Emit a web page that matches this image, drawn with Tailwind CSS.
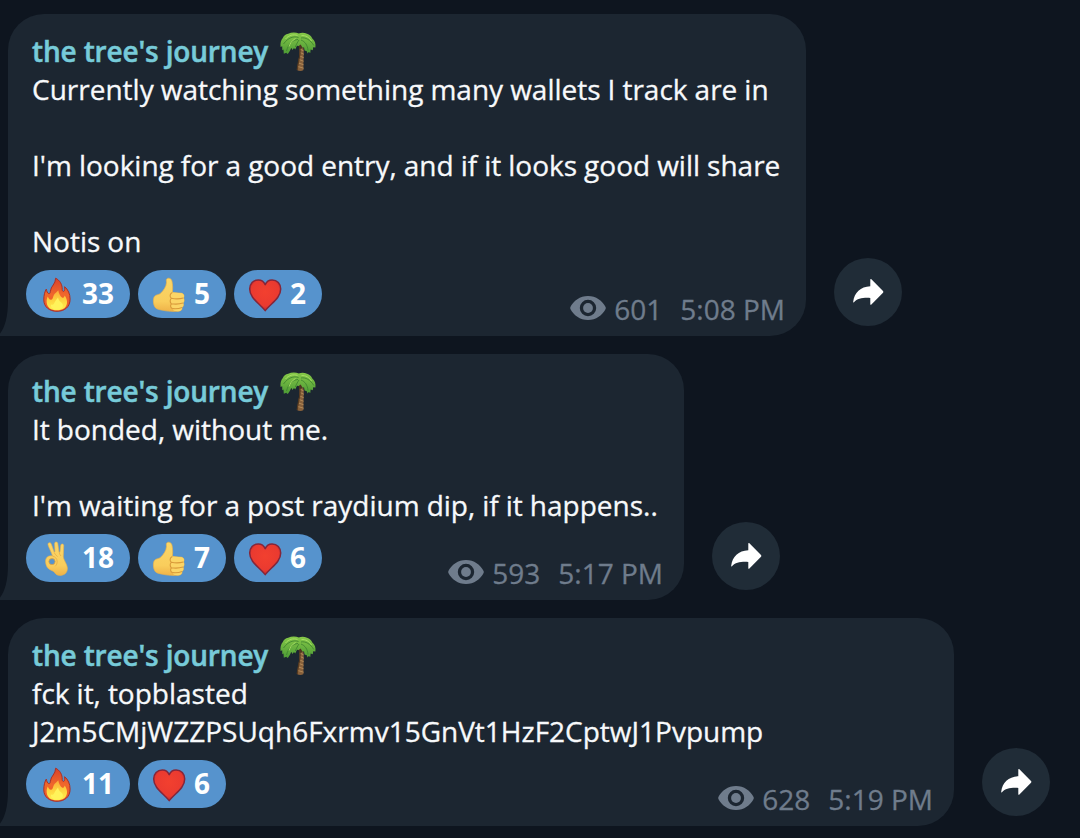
<!DOCTYPE html>
<html lang="en">
<head>
  <meta charset="UTF-8" />
  <meta name="viewport" content="width=device-width, initial-scale=1.0"/>
  <title>the tree's journey</title>
  <script src="https://cdn.jsdelivr.net/npm/@tailwindcss/browser@4"></script>
</head>
<body class="bg-[#0e151f] font-['Open_Sans','Noto_Sans',sans-serif] text-[28px] leading-[38px] text-[#f7f9fb] overflow-hidden">

  <!-- shared icons -->
  <svg class="absolute w-0 h-0" aria-hidden="true">
    <defs>
      <linearGradient id="gFire" x1="0" y1="0" x2="0" y2="1">
        <stop offset="0" stop-color="#d9412a"/><stop offset=".5" stop-color="#f0672c"/><stop offset="1" stop-color="#e8552a"/>
      </linearGradient>
      <linearGradient id="gFlame" x1="0" y1="0" x2="0" y2="1">
        <stop offset="0" stop-color="#fba93a"/><stop offset=".5" stop-color="#fdd33f"/><stop offset="1" stop-color="#fff04f"/>
      </linearGradient>
      <radialGradient id="gHeart" cx=".5" cy=".4" r=".6">
        <stop offset="0" stop-color="#f2402f"/><stop offset=".75" stop-color="#ea3a30"/><stop offset="1" stop-color="#c3282b"/>
      </radialGradient>
      <linearGradient id="gHand" x1="0" y1="0" x2="0" y2="1">
        <stop offset="0" stop-color="#fbd768"/><stop offset=".7" stop-color="#f9cd5c"/><stop offset="1" stop-color="#efb349"/>
      </linearGradient>
      <linearGradient id="gLeaf" x1="0" y1="0" x2="0" y2="1">
        <stop offset="0" stop-color="#86c948"/><stop offset="1" stop-color="#4c9a35"/>
      </linearGradient>
    </defs>
    <symbol id="fire" viewBox="0 0 34 36">
      <path d="M15.600 2.200C19.800 4.200 22.400 8.400 22.200 13.600C22.200 14.800 22.900 15.700 23.800 15.300C24.900 14.700 24.900 12.500 24.600 10.700C28 13.400 30.100 18 30.100 23.100C30.100 30.900 24.700 35.300 17 35.300C9.300 35.300 3.800 30.900 3.800 23.900C3.800 19.200 4.700 15.600 6.300 13.100C6.700 15.200 7.400 17 8.700 17.600C9.600 17.900 10.200 17 10.300 15.700C10.700 9.800 15.800 8.200 15.600 2.200Z" fill="url(#gFire)" stroke="#a92f27" stroke-width="1"/>
      <path d="M18.300 14.200C18.800 17.800 20.400 20.300 22 21.500C23.100 22.200 24.200 21.300 24.600 19.400C26.200 21.300 27.300 24 27 27C26.400 32 22.500 34.300 17 34.300C11.200 34.300 7.300 31.800 6.700 26.800C6.400 24.200 6.900 22.200 7.800 20.600C8.600 22.800 9.800 24.200 11.200 23.800C12.900 23.300 12.900 21.100 13.900 19C14.800 17 16.900 16.200 18.300 14.200Z" fill="url(#gFlame)"/>
      <path d="M18 21.500C18.400 24.500 21 26 22.500 28C24 31 21 33.500 17 33.500C13 33.500 10.500 31.500 11 28.500C12 29 13.300 29 14 27.500C14.800 25.600 16 24.300 18 21.500Z" fill="#fff35a"/>
    </symbol>
    <symbol id="thumb" viewBox="0 0 34 36">
      <path d="M14.800 2.900C16.300 1.500 19.200 2.300 19.900 4.900C20.700 8.500 20.900 12.500 20.300 16.500L29.400 17.200C32 17.500 32.600 20.300 31.400 22C32.500 23.300 32.400 25.700 31 27C31.900 28.700 31.400 30.500 30 31.500C30.400 33.800 28.700 35.200 26.200 35.300C20.600 35.500 15.500 35.400 11 34.300C8.500 33.700 5 33.600 3.400 31.700C1 28.700.8 22.600 2.500 20.400C4.200 18.400 7 18.900 8.700 17.200C11.500 14.500 14.300 10.800 14.500 6.600C14.500 5.300 14 3.800 14.800 2.900Z" fill="url(#gHand)" stroke="#e9b24b" stroke-width=".7"/>
      <path d="M20.300 16.500L29.400 17.200C32 17.500 32.600 20.300 31.400 22C32.500 23.300 32.400 25.700 31 27C31.900 28.700 31.400 30.500 30 31.500C30.300 33.800 28.700 35.200 26.200 35.300C23 35.400 20.800 34.900 20.500 32.600C18.400 32 18.100 29.300 19.400 27.800C17.900 26.500 17.700 23.800 19.300 22.300C17.400 20.500 17.800 17.600 20.300 16.500Z" fill="#fbd566"/>
      <path d="M20.300 16.500C17.800 17.600 17.400 20.500 19.300 22.300C17.700 23.800 17.900 26.500 19.400 27.800C18.100 29.300 18.400 32 20.500 32.600M19.500 22.300C23.500 23.100 28 22.900 31.400 22M19.500 27.800C23.500 28.400 27.500 28.200 31 27M20.600 32.600C23.800 32.900 27.200 32.700 30 31.500" fill="none" stroke="#d99a3a" stroke-width="1.100"/>
    </symbol>
    <symbol id="heart" viewBox="0 0 34 36">
      <path d="M17.200 8.600C15.900 5.400 13.200 3.900 10.300 3.900C5.200 3.900 1.700 7.800 1.700 13C1.700 22 11 27 17.200 34.600C23.400 27 32.700 22 32.700 13C32.700 7.800 29.200 3.900 24.100 3.900C21.200 3.900 18.500 5.400 17.200 8.600Z" fill="url(#gHeart)" stroke="#84263a" stroke-width="1.500" stroke-linejoin="round"/>
    </symbol>
    <symbol id="ok" viewBox="0 0 34 36">
      <path d="M8.500 3.100C9.600 2.200 10.900 2.700 11.400 4.200L14.100 12L15 12L14.600 3.600C14.600 1.600 17.300 1.400 17.800 3.500L19 12.300L20 12.200L20.800 5.200C21.200 3.400 23.700 3.600 23.700 5.500L23.300 16.500C23.200 19.500 27.200 24 27.400 28C27.500 31.500 25.900 34.300 22 35.200C18.500 36 16.100 35 14.500 32.400C13.200 30.300 9 30.200 7.400 27.500C5.600 24.500 4.800 20.400 6.500 17.900C7.800 16 10.300 15.300 12.600 16.100C11.500 12.300 8.600 7.500 8 4.800C7.900 4.100 8 3.500 8.500 3.100Z" fill="url(#gHand)" stroke="#e9b24b" stroke-width=".6"/>
      <circle cx="12" cy="21.600" r="3.100" fill="#5693cd" stroke="#dfa23f" stroke-width=".8"/>
      <path d="M14.100 12.500C15 14 16 15.500 17.600 16.600M19.200 12.800C19.600 14.200 20.100 15.200 21 16M12.600 16.100C15 16.600 17 18.500 17.200 21.400C17.200 23.500 16.500 25 15.200 26.300" fill="none" stroke="#e6ac46" stroke-width=".8"/>
    </symbol>
    <symbol id="palm" viewBox="0 0 36 40">
      <path d="M18 11L22.600 10.800C23.600 16 24 21 23.600 26C23.400 30 23.400 34 23.500 38C21.800 39.400 18.600 39.200 17 38C17.800 32 19.400 26 19.500 20C19.600 16.500 19 13.500 18 11Z" fill="#87603b"/>
      <path d="M19.900 17L23.500 18.800M20.100 20.500L23.800 22.200M19.700 24L23.700 25.700M19.200 27.500L23.500 29.200M18.500 31L23.500 32.700M17.900 34.500L23.600 36.200" stroke="#b98f5b" stroke-width=".9"/>
      <path d="M19.600 12C20.500 18 20 24 18.600 29C18.100 32 17.500 35 17.200 38" fill="none" stroke="#55391f" stroke-width="1.200"/>
      <path d="M18 11.500L22.600 11.300L23.300 16L19.300 17Z" fill="#4c3520"/>
      <path d="M18.800 1.600C16 .3 11.500.2 8.200 1.800C5.600 2.200 3.600 3.800 2.800 6C.9 8.200.1 11.500.6 15L2.200 14.300L2.300 18.200L3.500 17.600L3.800 21.800L6.300 20.800L7.400 22C8.800 21 9.800 19.300 10.500 17.500L11.300 15.800L12.400 18L14 16L15.200 17.500L17 13.800L18.700 14L20.600 12.500L22.600 15.800L24 15.200L24.600 18.600L26.800 19.200L27.500 21.600L28.700 20L30.300 21L30.600 17.500L32.800 18.300L33.200 15.200L35.400 15.400C36 11.500 34.800 8.400 32.300 6.400C31.200 4 29.500 2.600 27 1.800C24.300.4 21 .4 18.800 1.600Z" fill="url(#gLeaf)"/>
      <path d="M18.500 5.500C14 3.800 8 5.500 3.500 12M18 7.500C13 7.800 8.500 11.500 6.500 19M19 8C18 9.500 16.500 12 15.300 15M21 6C25.500 5 30.500 8 33.800 13.500M21 8C25 9.500 27.500 13 28 18.500" fill="none" stroke="#3b7f2f" stroke-width=".8"/>
      <path d="M17.500 3.500C13.500 2 8.500 3.300 5.500 7M21.500 3.500C25.500 3.200 29.500 5.500 31.500 9M15.500 6.500C12 8.500 10 11.500 9 14.500" fill="none" stroke="#abe066" stroke-width=".9"/>
    </symbol>
    <symbol id="eye" viewBox="0 0 36 24">
      <path fill-rule="evenodd" d="M18 0C26 0 32.500 4.800 35.600 11Q36 12 35.600 13C32.500 19.200 26 24 18 24C10 24 3.500 19.200.4 13Q0 12 .4 11C3.500 4.800 10 0 18 0ZM18 3.800A8.200 8.200 0 1 0 18 20.200A8.200 8.200 0 1 0 18 3.800Z" fill="currentColor"/>
      <circle cx="18" cy="12" r="4.900" fill="currentColor"/>
    </symbol>
    <symbol id="share" viewBox="0 0 32 28">
      <path d="M18.300 1.600C18.300.9 18.900.8 19.400 1.300L31 12.900Q31.800 13.800 31 14.700L19.400 26.500C18.900 27 18.300 26.900 18.300 26.200V19.900C10.500 19.500 5.500 20.500 2 24.200C1.500 24.600 1.100 24.400 1.200 23.800C2.300 14.500 8.500 8.700 18.300 8.200Z" fill="#fff"/>
    </symbol>
    <symbol id="tail" viewBox="0 0 8 36">
      <path d="M8 0V36H0V33.500C5 27 8 17 8 0Z" fill="#1c2631"/>
    </symbol>
  </svg>

  <main class="pt-[14px] pl-2 flex flex-col gap-[18px]">

    <div class="flex items-end gap-7">
      <div class="relative w-[798px] h-[322px] bg-[#1c2631] rounded-[36px] rounded-bl-none pt-[18px] pl-6">
        <svg class="absolute -left-2 bottom-0 w-2 h-9"><use href="#tail"/></svg>
        <div class="flex gap-3 h-[38px] whitespace-nowrap">
          <span class="font-semibold tracking-[-0.16px] text-[#77cbd9] [-webkit-text-stroke:0.5px]">the tree's journey</span>
          <svg class="w-9 h-10 shrink-0"><use href="#palm"/></svg>
        </div>
        <p class="whitespace-nowrap [word-spacing:-0.25px] [-webkit-text-stroke:0.3px]">Currently watching something many wallets I track are in<br><br>I'm looking for a good entry, and if it looks good will share<br><br>Notis on</p>
        <div class="flex gap-2 mt-[10px] -ml-1.5 font-bold text-white">
          <div class="flex items-center gap-2 h-12 rounded-full bg-[#5693cd] pl-3.5 pr-4"><svg class="w-[34px] h-9"><use href="#fire"/></svg><span class="-mt-0.5">33</span></div>
          <div class="flex items-center gap-2 h-12 rounded-full bg-[#5693cd] pl-3.5 pr-4"><svg class="w-[34px] h-9"><use href="#thumb"/></svg><span class="-mt-0.5">5</span></div>
          <div class="flex items-center gap-2 h-12 rounded-full bg-[#5693cd] pl-3.5 pr-4"><svg class="w-[34px] h-9"><use href="#heart"/></svg><span class="-mt-0.5">2</span></div>
        </div>
        <div class="absolute right-[21px] bottom-2 flex items-center text-[#6f7c8c] whitespace-nowrap [-webkit-text-stroke:0.3px]">
          <svg class="w-9 h-6 mr-2 -mt-0.5"><use href="#eye"/></svg><span class="mr-[18px]">601</span><span>5:08 PM</span>
        </div>
      </div>
      <button class="size-[68px] mb-2.5 rounded-full bg-[#202c37] flex items-center justify-center"><svg class="w-8 h-7"><use href="#share"/></svg></button>
    </div>

    <div class="flex items-end gap-7">
      <div class="relative w-[676px] h-[246px] bg-[#1c2631] rounded-[36px] rounded-bl-none pt-[18px] pl-6">
        <svg class="absolute -left-2 bottom-0 w-2 h-9"><use href="#tail"/></svg>
        <div class="flex gap-3 h-[38px] whitespace-nowrap">
          <span class="font-semibold tracking-[-0.16px] text-[#77cbd9] [-webkit-text-stroke:0.5px]">the tree's journey</span>
          <svg class="w-9 h-10 shrink-0"><use href="#palm"/></svg>
        </div>
        <p class="whitespace-nowrap [word-spacing:-0.25px] [-webkit-text-stroke:0.3px]">It bonded, without me.<br><br>I'm waiting for a post raydium dip, if it happens..</p>
        <div class="flex gap-2 mt-[10px] -ml-1.5 font-bold text-white">
          <div class="flex items-center gap-2 h-12 rounded-full bg-[#5693cd] pl-3.5 pr-4"><svg class="w-[34px] h-9"><use href="#ok"/></svg><span class="-mt-0.5">18</span></div>
          <div class="flex items-center gap-2 h-12 rounded-full bg-[#5693cd] pl-3.5 pr-4"><svg class="w-[34px] h-9"><use href="#thumb"/></svg><span class="-mt-0.5">7</span></div>
          <div class="flex items-center gap-2 h-12 rounded-full bg-[#5693cd] pl-3.5 pr-4"><svg class="w-[34px] h-9"><use href="#heart"/></svg><span class="-mt-0.5">6</span></div>
        </div>
        <div class="absolute right-[21px] bottom-2 flex items-center text-[#6f7c8c] whitespace-nowrap [-webkit-text-stroke:0.3px]">
          <svg class="w-9 h-6 mr-2 -mt-0.5"><use href="#eye"/></svg><span class="mr-[18px]">593</span><span>5:17 PM</span>
        </div>
      </div>
      <button class="size-[68px] mb-2.5 rounded-full bg-[#202c37] flex items-center justify-center"><svg class="w-8 h-7"><use href="#share"/></svg></button>
    </div>

    <div class="flex items-end gap-7">
      <div class="relative w-[946px] h-[208px] bg-[#1c2631] rounded-[36px] rounded-bl-none pt-[18px] pl-6">
        <svg class="absolute -left-2 bottom-0 w-2 h-9"><use href="#tail"/></svg>
        <div class="flex gap-3 h-[38px] whitespace-nowrap">
          <span class="font-semibold tracking-[-0.16px] text-[#77cbd9] [-webkit-text-stroke:0.5px]">the tree's journey</span>
          <svg class="w-9 h-10 shrink-0"><use href="#palm"/></svg>
        </div>
        <p class="whitespace-nowrap [word-spacing:-0.25px] [-webkit-text-stroke:0.3px]">fck it, topblasted<br>J2m5CMjWZZPSUqh6Fxrmv15GnVt1HzF2CptwJ1Pvpump</p>
        <div class="flex gap-2 mt-[10px] -ml-1.5 font-bold text-white">
          <div class="flex items-center gap-2 h-12 rounded-full bg-[#5693cd] pl-3.5 pr-4"><svg class="w-[34px] h-9"><use href="#fire"/></svg><span class="-mt-0.5">11</span></div>
          <div class="flex items-center gap-2 h-12 rounded-full bg-[#5693cd] pl-3.5 pr-4"><svg class="w-[34px] h-9"><use href="#heart"/></svg><span class="-mt-0.5">6</span></div>
        </div>
        <div class="absolute right-[21px] bottom-2 flex items-center text-[#6f7c8c] whitespace-nowrap [-webkit-text-stroke:0.3px]">
          <svg class="w-9 h-6 mr-2 -mt-0.5"><use href="#eye"/></svg><span class="mr-[18px]">628</span><span>5:19 PM</span>
        </div>
      </div>
      <button class="size-[68px] mb-2.5 rounded-full bg-[#202c37] flex items-center justify-center"><svg class="w-8 h-7"><use href="#share"/></svg></button>
    </div>

  </main>
</body>
</html>
